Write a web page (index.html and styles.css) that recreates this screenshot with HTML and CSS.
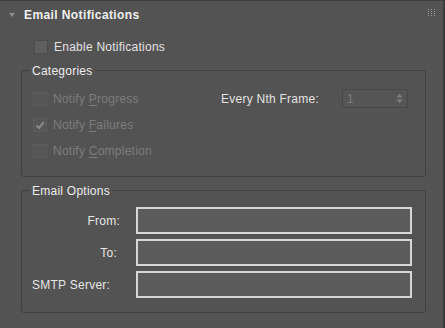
FILE: index.html
```html
<!DOCTYPE html>
<html>
<head>
<meta charset="utf-8">
<link rel="stylesheet" href="styles.css">
</head>
<body>
<div class="panel">
  <div class="header">
    <span class="tri"></span>
    <span class="title">Email Notifications</span>
    <svg class="grip" width="7" height="8" viewBox="0 0 7 8">
      <g fill="#9a9a9a">
        <rect x="0" y="0" width="1" height="1"/><rect x="3" y="0" width="1" height="1"/><rect x="6" y="0" width="1" height="1"/>
        <rect x="0" y="2" width="1" height="1"/><rect x="3" y="2" width="1" height="1"/><rect x="6" y="2" width="1" height="1"/>
        <rect x="0" y="4" width="1" height="1"/><rect x="3" y="4" width="1" height="1"/><rect x="6" y="4" width="1" height="1"/>
        <rect x="0" y="6" width="1" height="1"/><rect x="3" y="6" width="1" height="1"/><rect x="6" y="6" width="1" height="1"/>
      </g>
    </svg>
  </div>

  <div class="enable">
    <span class="cb"></span>
    <span class="lbl">Enable Notifications</span>
  </div>

  <div class="group cats">
    <div class="gtitle">Categories</div>
    <div class="rows">
      <div class="row">
        <div class="check">
          <span class="cb dis"></span>
          <span class="lbl dim">Notify <u>P</u>rogress</span>
        </div>
        <span class="nth">Every Nth Frame:</span>
        <div class="spin">
          <span class="spin-val">1</span>
          <svg class="spin-arrows" width="7" height="11" viewBox="0 0 7 11">
            <path d="M0.5 4.5 L3.5 0.5 L6.5 4.5 Z" fill="#7c7c7c"/>
            <path d="M0.5 6.5 L3.5 10.5 L6.5 6.5 Z" fill="#7c7c7c"/>
          </svg>
        </div>
      </div>
      <div class="row">
        <div class="check">
          <span class="cb dis">
            <svg width="12" height="12" viewBox="0 0 12 12"><path d="M2.5 6.5 L5 9 L10 3" fill="none" stroke="#8a8a8a" stroke-width="2"/></svg>
          </span>
          <span class="lbl dim">Notify <u>F</u>ailures</span>
        </div>
      </div>
      <div class="row">
        <div class="check">
          <span class="cb dis"></span>
          <span class="lbl dim">Notify <u>C</u>ompletion</span>
        </div>
      </div>
    </div>
  </div>

  <div class="group mail">
    <div class="gtitle">Email Options</div>
    <div class="form">
      <span class="flabel l-from">From:</span>
      <span class="field"></span>
      <span class="flabel l-to">To:</span>
      <span class="field"></span>
      <span class="flabel l-smtp">SMTP Server:</span>
      <span class="field"></span>
    </div>
  </div>
</div>
</body>
</html>
```

FILE: styles.css
```css
html, body {
  margin: 0;
  padding: 0;
  background: #535353;
}
body {
  width: 445px;
  height: 328px;
  overflow: hidden;
  font-family: "Liberation Sans", Arial, sans-serif;
  font-size: 12px;
  letter-spacing: 0.25px;
  color: #e2e2e2;
}
.panel {
  box-sizing: border-box;
  width: 445px;
  height: 328px;
  border-top: 1px solid #3e3e3e;
  border-right: 2px solid #3c3c3c;
  background: #535353;
  display: flex;
  flex-direction: column;
}
.header {
  height: 27px;
  display: flex;
  align-items: center;
  padding-left: 9px;
  position: relative;
}
.tri {
  width: 0;
  height: 0;
  border-left: 3.5px solid transparent;
  border-right: 3.5px solid transparent;
  border-top: 4px solid #8c8c8c;
}
.title {
  margin-left: 9px;
  font-weight: bold;
  font-size: 12px;
  letter-spacing: 0.4px;
  color: #f0f0f0;
  line-height: 14px;
}
.grip {
  position: absolute;
  left: 428px;
  top: 8px;
}
.enable {
  margin-top: 11px;
  height: 16px;
  display: flex;
  align-items: center;
  padding-left: 34px;
}
.cb {
  box-sizing: border-box;
  width: 14px;
  height: 14px;
  background: #5f5f5f;
  border: 1px solid #4c4c4c;
  display: flex;
  align-items: center;
  justify-content: center;
  flex: none;
}
.cb.dis {
  background: #565656;
  border: 1px solid #5c5c5c;
}
.lbl {
  margin-left: 6px;
  line-height: 14px;
  white-space: nowrap;
}
.dim {
  color: #7c7c7c;
}
.dim u {
  text-decoration-thickness: 1px;
  text-underline-offset: 2px;
}
.group {
  box-sizing: border-box;
  margin: 0 17px 0 21px;
  border: 1px solid #414141;
  border-radius: 3px;
  display: flex;
  flex-direction: column;
}
.cats {
  margin-top: 15px;
  padding-bottom: 12px;
}
.mail {
  margin-top: 13px;
  padding-bottom: 14px;
}
.gtitle {
  align-self: flex-start;
  margin-top: -7px;
  margin-left: 8px;
  padding: 0 2px;
  line-height: 14px;
  background: #535353;
  color: #ececec;
}
.rows {
  margin-top: 8px;
  padding-left: 11px;
  display: flex;
  flex-direction: column;
}
.row {
  height: 26px;
  display: flex;
  align-items: center;
}
.check {
  width: 188px;
  display: flex;
  align-items: center;
}
.nth {
  width: 121px;
  line-height: 14px;
  color: #e2e2e2;
  white-space: nowrap;
}
.spin {
  box-sizing: border-box;
  width: 66px;
  height: 19px;
  border: 1px solid #484848;
  background: #555555;
  display: flex;
  align-items: center;
  justify-content: space-between;
  padding: 0 4px 0 4px;
  margin-top: -1px;
}
.spin-val {
  color: #7a7a7a;
  line-height: 14px;
}
.form {
  margin-top: 9px;
  display: grid;
  grid-template-columns: 114px 276px;
  grid-auto-rows: 27px;
  row-gap: 5px;
  align-items: center;
}
.flabel {
  line-height: 14px;
  color: #e6e6e6;
  white-space: nowrap;
}
.l-from {
  text-align: right;
  padding-right: 16px;
}
.l-to {
  text-align: right;
  padding-right: 19px;
}
.l-smtp {
  padding-left: 10px;
}
.field {
  box-sizing: border-box;
  height: 27px;
  border: 2px solid #d6d6d6;
  background: #5b5b5b;
}
```
